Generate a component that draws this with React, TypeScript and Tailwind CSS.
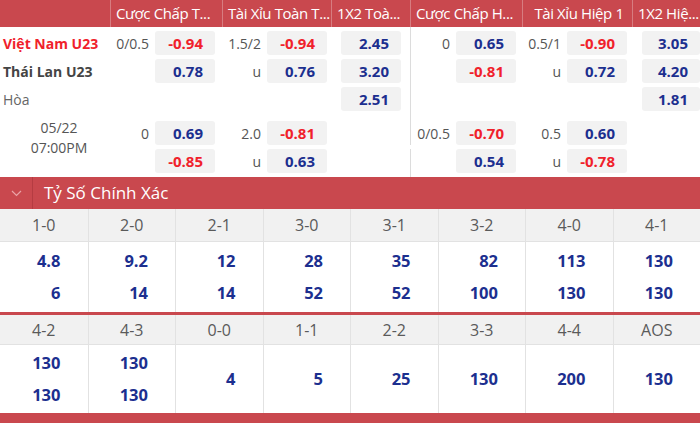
import React from "react";

type Cell = { line?: string; val?: string; red?: boolean };

const COLS = [
  { w: "w-[112px]", pr: "pr-[7px]", border: false },
  { w: "w-[109px]", pr: "pr-[4px]", border: false },
  { w: "w-[79px]", pr: "pr-[9px]", border: false },
  { w: "w-[112px]", pr: "pr-[6px]", border: true },
  { w: "w-[110px]", pr: "pr-[5px]", border: false },
  { w: "w-[68px]", pr: "pr-0", border: false },
];

function MarketCell({ idx, cell }: { idx: number; cell: Cell }) {
  const c = COLS[idx];
  return (
    <div
      className={`${c.w} ${c.pr} shrink-0 h-[24px] flex items-center justify-end gap-[6px] ${
        c.border ? "border-l border-[#dcdcdc]" : ""
      }`}
    >
      {cell.line ? (
        <span className="text-[14px] text-[#555]">{cell.line}</span>
      ) : null}
      {cell.val ? (
        <div
          className={`${idx === 5 ? "w-[58px]" : "w-[60px]"} h-[24px] rounded-[3px] bg-[#f2f2f2] flex items-center justify-end pr-3 text-[15px] font-bold ${
            cell.red ? "text-[#f0212b]" : "text-[#1c2f8f]"
          }`}
        >
          {cell.val}
        </div>
      ) : null}
    </div>
  );
}

function Row({ left, cells }: { left: React.ReactNode; cells: Cell[] }) {
  return (
    <div className="flex h-[24px]">
      <div className="w-[110px] shrink-0 pl-[3px] flex items-center">{left}</div>
      {cells.map((c, i) => (
        <MarketCell key={i} idx={i} cell={c} />
      ))}
    </div>
  );
}

function Gap({ h }: { h: string }) {
  return (
    <div className={`flex ${h}`}>
      <div className="w-[331px]" />
      <div className="w-[79px]" />
      <div className="w-[290px] border-l border-[#dcdcdc]" />
    </div>
  );
}

const headers = [
  { t: "", w: "w-[110px]", c: false },
  { t: "Cược Chấp T...", w: "w-[112px]", c: false },
  { t: "Tài Xỉu Toàn T...", w: "w-[109px]", c: false },
  { t: "1X2 Toà...", w: "w-[79px]", c: false },
  { t: "Cược Chấp H...", w: "w-[112px]", c: false },
  { t: "Tài Xỉu Hiệp 1", w: "w-[110px]", c: true },
  { t: "1X2 Hiệ...", w: "w-[68px]", c: false },
];

type Score = { label: string; vals: string[] };
const table1: Score[] = [
  { label: "1-0", vals: ["4.8", "6"] },
  { label: "2-0", vals: ["9.2", "14"] },
  { label: "2-1", vals: ["12", "14"] },
  { label: "3-0", vals: ["28", "52"] },
  { label: "3-1", vals: ["35", "52"] },
  { label: "3-2", vals: ["82", "100"] },
  { label: "4-0", vals: ["113", "130"] },
  { label: "4-1", vals: ["130", "130"] },
];
const table2: Score[] = [
  { label: "4-2", vals: ["130", "130"] },
  { label: "4-3", vals: ["130", "130"] },
  { label: "0-0", vals: ["4"] },
  { label: "1-1", vals: ["5"] },
  { label: "2-2", vals: ["25"] },
  { label: "3-3", vals: ["130"] },
  { label: "4-4", vals: ["200"] },
  { label: "AOS", vals: ["130"] },
];

function ScoreTable({ data, headH, valH }: { data: Score[]; headH: string; valH: string }) {
  return (
    <div className="grid grid-cols-8">
      {data.map((d, i) => (
        <div key={i} className={`flex flex-col ${i > 0 ? "border-l border-[#e2e2e2]" : ""}`}>
          <div
            className={`${headH} bg-[#f1f1f1] border-b border-[#e2e2e2] flex items-center justify-center text-[16px] text-[#5a5a5a]`}
          >
            {d.label}
          </div>
          <div className={`${valH} flex flex-col justify-center`}>
            {d.vals.map((v, j) => (
              <div key={j} className="leading-[32px] text-right pr-[27px] text-[16.5px] font-bold text-[#1c2f8f]">
                {v}
              </div>
            ))}
          </div>
        </div>
      ))}
    </div>
  );
}

export default function App() {
  return (
    <div
      className="w-[700px] h-[423px] overflow-hidden bg-white"
      style={{ fontFamily: '"Open Sans", "Noto Sans", sans-serif' }}
    >
      {/* header */}
      <div className="flex h-[27px] bg-[#c9484e] text-white text-[15px] tracking-[-0.4px]">
        {headers.map((h, i) => (
          <div
            key={i}
            className={`${h.w} shrink-0 pl-[5px] pr-[2px] flex items-center ${
              h.c ? "justify-center" : "justify-start"
            } whitespace-nowrap overflow-hidden ${i > 0 ? "border-l border-[#d77c80]" : ""}`}
          >
            {h.t}
          </div>
        ))}
      </div>

      {/* block 1 */}
      <Gap h="h-[4px]" />
      <Row
        left={<span className="text-[14px] font-bold text-[#f0212b]">Việt Nam U23</span>}
        cells={[
          { line: "0/0.5", val: "-0.94", red: true },
          { line: "1.5/2", val: "-0.94", red: true },
          { val: "2.45" },
          { line: "0", val: "0.65" },
          { line: "0.5/1", val: "-0.90", red: true },
          { val: "3.05" },
        ]}
      />
      <Gap h="h-[4px]" />
      <Row
        left={<span className="text-[14px] font-bold text-[#444]">Thái Lan U23</span>}
        cells={[
          { val: "0.78" },
          { line: "u", val: "0.76" },
          { val: "3.20" },
          { val: "-0.81", red: true },
          { line: "u", val: "0.72" },
          { val: "4.20" },
        ]}
      />
      <Gap h="h-[4px]" />
      <Row
        left={<span className="text-[14px] text-[#666]">Hòa</span>}
        cells={[{}, {}, { val: "2.51" }, {}, {}, { val: "1.81" }]}
      />
      <Gap h="h-[10px]" />

      {/* block 2 */}
      <div className="flex">
        <div className="w-[110px] shrink-0 pl-[8px] -mt-[3px] flex flex-col items-center text-[14px] leading-[20px] text-[#555]">
          <span>05/22</span>
          <span>07:00PM</span>
        </div>
        <div className="flex flex-col">
          {[
            [
              { line: "0", val: "0.69" },
              { line: "2.0", val: "-0.81", red: true },
              {},
              { line: "0/0.5", val: "-0.70", red: true },
              { line: "0.5", val: "0.60" },
              {},
            ],
            [
              { val: "-0.85", red: true },
              { line: "u", val: "0.63" },
              {},
              { val: "0.54" },
              { line: "u", val: "-0.78", red: true },
              {},
            ],
          ].map((row, ri) => (
            <div key={ri} className={`flex ${ri === 1 ? "mt-[4px]" : ""}`}>
              {row.map((c, i) => (
                <MarketCell key={i} idx={i} cell={c as Cell} />
              ))}
            </div>
          ))}
          <div className="flex h-[4px]">
            <div className="w-[221px]" />
            <div className="w-[79px]" />
            <div className="w-[290px] border-l border-[#dcdcdc]" />
          </div>
        </div>
      </div>

      {/* section header */}
      <div className="flex h-[32px] bg-[#c9484e]">
        <div className="w-[33px] shrink-0 flex items-center justify-center border-r border-[#b53c42]">
          <svg width="11" height="7" viewBox="0 0 11 7" fill="none">
            <path d="M1 1l4.5 4.5L10 1" stroke="#eaa3a6" strokeWidth="1.2" />
          </svg>
        </div>
        <div className="pl-[11px] flex items-center text-white text-[17px]">Tỷ Số Chính Xác</div>
      </div>

      <ScoreTable data={table1} headH="h-[33px]" valH="h-[70px]" />
      <div className="h-[3px] bg-[#c9484e]" />
      <ScoreTable data={table2} headH="h-[30px]" valH="h-[68px]" />
      <div className="h-[10px] bg-[#c9484e]" />
    </div>
  );
}
